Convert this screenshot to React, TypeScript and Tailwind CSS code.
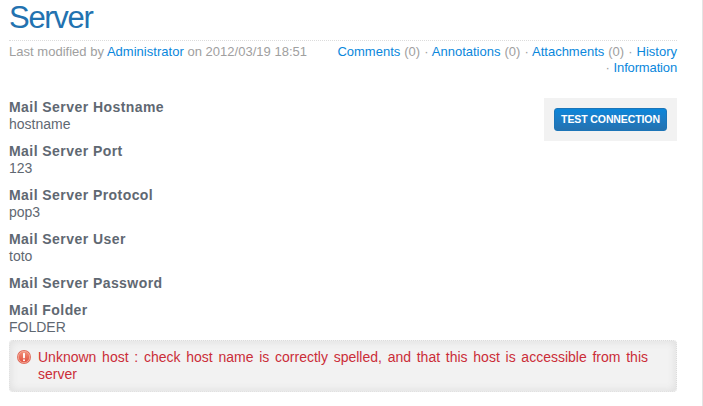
const fields = [
  { label: "Mail Server Hostname", value: "hostname" },
  { label: "Mail Server Port", value: "123" },
  { label: "Mail Server Protocol", value: "pop3" },
  { label: "Mail Server User", value: "toto" },
  { label: "Mail Server Password", value: "" },
  { label: "Mail Folder", value: "FOLDER" },
];

function Link({ children }: { children: string }) {
  return <a className="text-[#0a87dc]">{children}</a>;
}

function ErrorIcon() {
  return (
    <svg className="block size-4 shrink-0" viewBox="0 0 16 16">
      <defs>
        <linearGradient id="err" x1="0" y1="0" x2="0" y2="1">
          <stop offset="0" stopColor="#f2927a" />
          <stop offset="1" stopColor="#e04c3c" />
        </linearGradient>
      </defs>
      <circle cx="8" cy="8" r="7" fill="#df6a5a" />
      <circle cx="8" cy="8" r="5.7" fill="url(#err)" stroke="#f7b3a2" strokeWidth="0.8" />
      <path d="M8 4.6v3.8" stroke="#fff" strokeWidth="1.9" strokeLinecap="round" />
      <circle cx="8" cy="11.2" r="1" fill="#fff" />
    </svg>
  );
}

function Meta() {
  return (
    <div className="flex justify-between border-t border-dotted border-[#dcdcdc] pt-[3px] text-[13px] leading-4 text-[#a0a0a0]">
      <p className="tracking-[0.02px]">
        Last modified by <Link>Administrator</Link> on 2012/03/19 18:51
      </p>
      <div className="text-right [word-spacing:0.4px]">
        <p>
          <Link>Comments</Link> (0) · <Link>Annotations</Link> (0) · <Link>Attachments</Link> (0) · <Link>History</Link>
        </p>
        <p className="tracking-[-0.15px]">
          · <Link>Information</Link>
        </p>
      </div>
    </div>
  );
}

export default function App() {
  return (
    <div className="flex h-[406px] w-[703px] overflow-hidden bg-white font-['Liberation_Sans',Arial,sans-serif] text-[14px] leading-[17px] text-[#5f6872]">
      <main className="w-[703px] border-r border-[#e4e4e4] pr-[25px] pl-[9px]">
        <h1 className="h-10 text-[31px] leading-[35px] tracking-[-1.3px] text-[#2272b0]">Server</h1>
        <Meta />
        <div className="mt-[22px] flex items-start justify-between">
          <dl className="flex flex-col gap-[10px] pt-px">
            {fields.map((f) => (
              <div key={f.label}>
                <dt className="font-bold tracking-[0.44px]">{f.label}</dt>
                {f.value && <dd>{f.value}</dd>}
              </div>
            ))}
          </dl>
          <div className="h-[43px] w-[133px] bg-[#f2f2f2] p-[10px]">
            <button className="block h-[23px] w-[113px] rounded-[3px] border border-[#1c75b8] bg-linear-to-b from-[#0a86da] to-[#2472b0] text-[10.5px] leading-[21px] font-bold tracking-[-0.1px] whitespace-nowrap text-white">
              TEST CONNECTION
            </button>
          </div>
        </div>
        <div className="mt-[4px] flex h-[52px] gap-[6px] rounded-[4px] border border-dotted border-[#dcdcdc] bg-[#f2f2f2] pt-2 pr-[28px] pl-[6px] text-[#cb2d38] shadow-[inset_0_0_8px_#dcdcdc]">
          <ErrorIcon />
          <p className="flex-1 text-justify">
            Unknown host : check host name is correctly spelled, and that this host is accessible from this server
          </p>
        </div>
      </main>
    </div>
  );
}
